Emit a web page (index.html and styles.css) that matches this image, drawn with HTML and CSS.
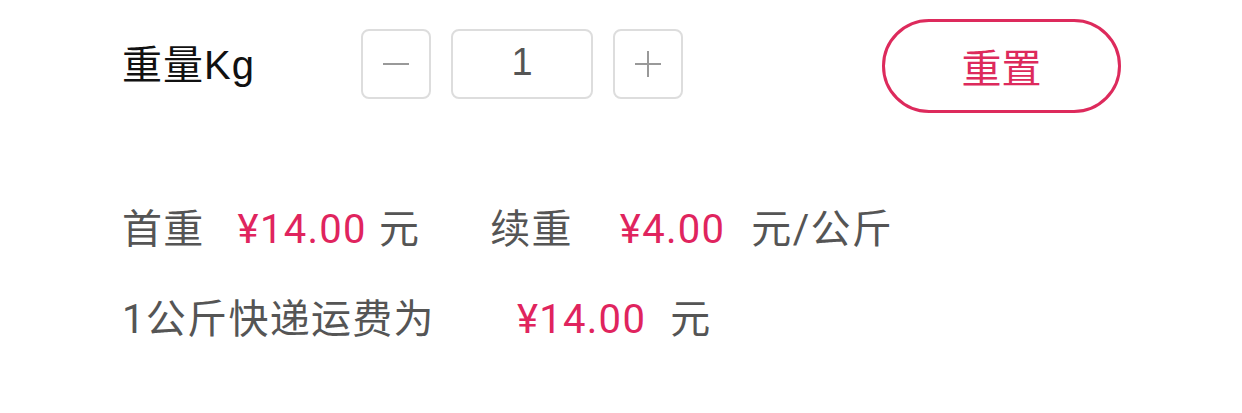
FILE: index.html
```html
<!DOCTYPE html>
<html lang="zh-CN">
	<head>
		<meta charset="UTF-8" />
		<title>运费计算</title>
		<link rel="stylesheet" href="styles.css">
	</head>
	<body>
		<div class="calc">
			<!-- 重量输入 -->
			<div class="weight-row">
				<span class="label">重量Kg</span>
				<div class="stepper">
					<button class="step">
						<svg width="28" height="28" viewBox="0 0 28 28"><path d="M1 14h26" stroke="#999" stroke-width="2"/></svg>
					</button>
					<input class="qty" type="text" value="1" />
					<button class="step">
						<svg width="28" height="28" viewBox="0 0 28 28"><path d="M1 14h26M14 1v26" stroke="#999" stroke-width="2"/></svg>
					</button>
				</div>
				<button class="reset">重置</button>
			</div>

			<!-- 价格说明 -->
			<div class="line line-rates">
				<span>首重</span>
				<span class="price first">¥14.00</span>
				<span class="unit">元</span>
				<span class="next">续重</span>
				<span class="price next-price">¥4.00</span>
				<span class="unit per-kg">元/公斤</span>
			</div>
			<div class="line line-total">
				<span>1公斤快递运费为</span>
				<span class="price total">¥14.00</span>
				<span class="unit total-unit">元</span>
			</div>
		</div>
	</body>
</html>
```

FILE: styles.css
```css
body {
	margin: 0;
	background: #fff;
	font-family: Roboto, "Noto Sans CJK SC", sans-serif;
}
.calc {
	padding: 19px 121px 0 122px;
}
.weight-row {
	display: flex;
	align-items: center;
	height: 94px;
}
.label {
	width: 239px;
	font-size: 40px;
	letter-spacing: 1px;
	color: #111;
	font-family: "Liberation Sans", "Noto Sans CJK SC", sans-serif;
	margin-top: -8px;
}
.stepper {
	display: flex;
	gap: 20px;
	margin-top: -4px;
}
.step,
.qty {
	box-sizing: border-box;
	height: 70px;
	border: 2px solid #ddd;
	border-radius: 8px;
	background: #fff;
}
.step {
	width: 70px;
	padding: 0;
	display: flex;
	align-items: center;
	justify-content: center;
}
.qty {
	width: 142px;
	text-align: center;
	font-size: 38px;
	color: #555;
	font-family: "Liberation Sans", sans-serif;
	padding: 0 0 4px;
}
.reset {
	margin-left: auto;
	box-sizing: border-box;
	width: 239px;
	height: 94px;
	border: 3px solid #dd2a5c;
	border-radius: 47px;
	background: #fff;
	color: #dd2a5c;
	font-size: 40px;
	font-family: "Noto Sans CJK SC", sans-serif;
}
.line {
	display: flex;
	font-size: 40px;
	line-height: 60px;
	letter-spacing: 1.3px;
	color: #555;
	white-space: nowrap;
}
.line-rates {
	margin-top: 87px;
}
.line-total {
	margin-top: 30px;
}
.price {
	color: #e0245e;
}
.first {
	margin-left: 33px;
}
.unit {
	margin-left: 12px;
}
.next {
	margin-left: 70px;
}
.next-price {
	margin-left: 47px;
}
.per-kg {
	margin-left: 26px;
}
.total {
	margin-left: 82px;
}
.total-unit {
	margin-left: 24px;
}
```
